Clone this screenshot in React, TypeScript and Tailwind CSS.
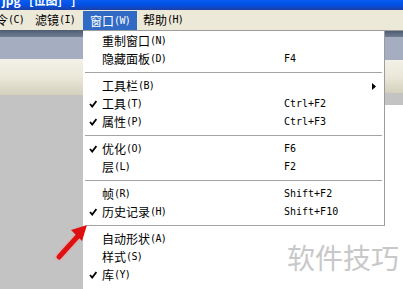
import React from "react";

type Item = {
  label: string;
  key: string;
  shortcut?: string;
  checked?: boolean;
  submenu?: boolean;
};

const groups: Item[][] = [
  [
    { label: "重制窗口", key: "N" },
    { label: "隐藏面板", key: "D", shortcut: "F4" },
  ],
  [
    { label: "工具栏", key: "B", submenu: true },
    { label: "工具", key: "T", shortcut: "Ctrl+F2", checked: true },
    { label: "属性", key: "P", shortcut: "Ctrl+F3", checked: true },
  ],
  [
    { label: "优化", key: "O", shortcut: "F6", checked: true },
    { label: "层", key: "L", shortcut: "F2" },
  ],
  [
    { label: "帧", key: "R", shortcut: "Shift+F2" },
    { label: "历史记录", key: "H", shortcut: "Shift+F10", checked: true },
  ],
];

const lastGroup: Item[] = [
  { label: "自动形状", key: "A" },
  { label: "样式", key: "S" },
  { label: "库", key: "Y", checked: true },
];

function Check() {
  return (
    <svg width="8" height="8" viewBox="0 0 8 8">
      <polyline points="1,4 3.2,6.6 7.4,1" fill="none" stroke="#000" strokeWidth="1.8" />
    </svg>
  );
}

function Label({ text, k, white }: { text: string; k: string; white?: boolean }) {
  return (
    <span className={`flex items-center leading-none ${white ? "text-white" : "text-black"}`}>
      <span className="text-[12px] font-['Noto_Sans_CJK_SC',sans-serif]">{text}</span>
      <span className="text-[10px] tracking-[-0.6px] font-['DejaVu_Sans_Mono',monospace]">({k})</span>
    </span>
  );
}

function Row({ item }: { item: Item }) {
  return (
    <div className="h-[18px] flex items-center">
      <div className="w-[19px] pl-[6px] flex items-center">{item.checked && <Check />}</div>
      <div className="w-[182px]">
        <Label text={item.label} k={item.key} />
      </div>
      <div className="flex-1 flex items-center justify-between pr-[8px]">
        <span className="text-[10px] leading-none text-black font-['DejaVu_Sans_Mono',monospace]">
          {item.shortcut}
        </span>
        {item.submenu && (
          <svg width="4" height="7" viewBox="0 0 4 7">
            <polygon points="0,0 4,3.5 0,7" fill="#000" />
          </svg>
        )}
      </div>
    </div>
  );
}

function Sep({ last }: { last?: boolean }) {
  return (
    <div className={`flex items-center ${last ? "h-[5px] items-end" : "h-[9px]"}`}>
      <div className={`h-px flex-1 bg-[#a4a4a4] ${last ? "ml-[4px]" : "mx-[2px]"}`} />
    </div>
  );
}

export default function App() {
  return (
    <div className="relative w-[403px] h-[289px] overflow-hidden bg-white font-['Noto_Sans_CJK_SC',sans-serif]">
      {/* title bar */}
      <div className="h-[10px] overflow-hidden bg-linear-to-b from-[#0a5cf2] via-[#0050e4] to-[#1a3fa6]">
        <div className="-mt-[6px] pl-[2px] text-[12px] font-bold text-white leading-none whitespace-nowrap">
          jpg* [位图] *]
        </div>
      </div>

      {/* menu bar */}
      <div className="h-[20px] bg-[#ece9d8] flex items-stretch">
        <div className="ml-[-16px] w-[51px] flex items-center">
          <Label text="命令" k="C" />
        </div>
        <div className="w-[48px] flex items-center">
          <Label text="滤镜" k="I" />
        </div>
        <div className="w-[54px] mt-[1px] bg-[#316ac5] flex items-center pl-[7px]">
          <Label text="窗口" k="W" white />
        </div>
        <div className="pl-[6px] flex items-center">
          <Label text="帮助" k="H" />
        </div>
      </div>

      {/* body */}
      <div className="flex h-[259px]">
        <div className="w-[83px] flex flex-col">
          <div className="h-[7px] bg-linear-to-b from-[#4f5d72] to-[#6f7d93]" />
          <div className="h-[22px] bg-[#a5aec1]" />
          <div className="h-[36px] bg-linear-to-b from-[#f3f1e8] via-[#ebe8da] to-[#d4d0bd]" />
          <div className="flex-1 bg-[#c3c3c3]" />
        </div>

        <div className="w-[302px] flex flex-col">
          <div className="border-t border-r border-[#9c9c9c] pt-[1px]">
            {groups.map((g, gi) => (
              <div key={gi}>
                {g.map((it) => (
                  <Row key={it.key} item={it} />
                ))}
                <Sep last={gi === groups.length - 1} />
              </div>
            ))}
          </div>
          <div className="pt-[4px]">
            {lastGroup.map((it) => (
              <Row key={it.key} item={it} />
            ))}
          </div>
        </div>

        <div className="flex-1 flex flex-col">
          <div className="h-px bg-[#9c9c9c]" />
          <div className="h-[6px] bg-linear-to-b from-[#4f5d72] to-[#6f7d93]" />
          <div className="h-[23px] bg-[#a5aec1]" />
          <div className="h-[33px] bg-linear-to-b from-[#f3f1e8] via-[#ebe8da] to-[#d4d0bd]" />
          <div className="h-[12px] bg-[#c3c3c3]" />
          <div className="flex-1 bg-white" />
        </div>
      </div>

      {/* red arrow */}
      <svg className="absolute left-[50px] top-[218px]" width="45" height="45" viewBox="0 0 45 45">
        <line x1="9" y1="39" x2="28" y2="18" stroke="#f0a0a0" strokeWidth="8" strokeLinecap="round" opacity="0.5" />
        <line x1="9" y1="39" x2="28" y2="18" stroke="#dd1111" strokeWidth="5" strokeLinecap="round" />
        <polygon points="37,7 21,12 32,23" fill="#dd1111" />
      </svg>

      {/* watermark */}
      <div className="absolute left-[287px] top-[243px] text-[28px] leading-none text-[#c8c8c8] whitespace-nowrap">
        软件技巧
      </div>
    </div>
  );
}
